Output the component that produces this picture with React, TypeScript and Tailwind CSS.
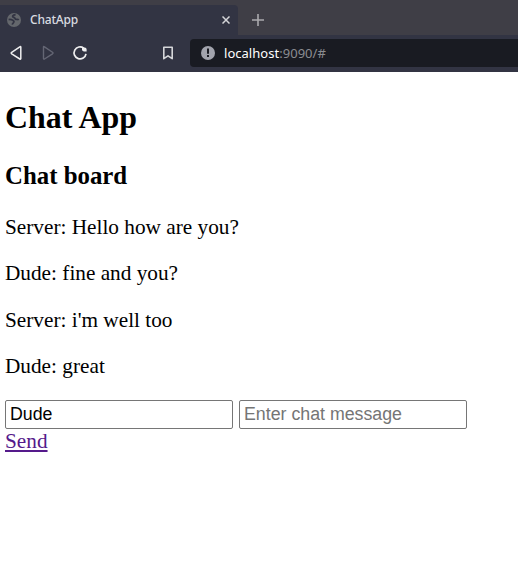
import React from "react";

function TabStrip() {
  return (
    <div className="flex h-[35px] items-end bg-[#3f3e46]">
      <div className="flex h-[30px] w-[238px] items-center rounded-tr-[4px] bg-[#323443] pl-[7px] pr-2">
        <svg width="14" height="14" viewBox="0 0 14 14">
          <circle cx="7" cy="7" r="7" fill="#64676c" />
          <path
            d="M8.6 1.6C7 1.8 5.6 2.4 5.6 3.4c0 1 1.4.8 2 1.4.5.6.3 1.3 1.3 1.5 1.2.2 2.2-.2 2.9.6M1.6 6.6c1.4-.3 3 0 4.2.7 1.2.8 1.6 1.3.8 2.2-.7.7-1.2 1-1.4 2.2"
            fill="none"
            stroke="#323443"
            strokeWidth="1.7"
          />
        </svg>
        <span className="ml-[9px] font-['Noto_Sans',sans-serif] text-[12px] font-medium leading-4 tracking-[-0.2px] text-[#d9dbe0]">ChatApp</span>
        <svg className="ml-auto" width="8" height="8" viewBox="0 0 8 8" fill="none" stroke="#d4d5d8" strokeWidth="1.5">
          <path d="M.5.5l7 7M7.5.5l-7 7" />
        </svg>
      </div>
      <svg className="mb-[9px] ml-[14px]" width="12" height="12" viewBox="0 0 12 12" fill="none" stroke="#aaa9ad" strokeWidth="1.6">
        <path d="M6 0v12M0 6h12" />
      </svg>
    </div>
  );
}

function Toolbar() {
  return (
    <div className="flex h-[37px] items-start bg-[#323443] pt-1">
      <div className="flex h-7 w-[190px] items-center pl-[10px]">
        <svg width="13" height="16" viewBox="0 0 13 16" fill="none" stroke="#eeeeef" strokeWidth="1.5" strokeLinejoin="round">
          <path d="M10.8 2v11.5q0 1-1 .5L1.7 8.8q-1-.8 0-1.5L9.8 1.8q1-.6 1 .2z" />
        </svg>
        <svg className="ml-[19px]" width="13" height="16" viewBox="0 0 13 16" fill="none" stroke="#646674" strokeWidth="1.4" strokeLinejoin="round">
          <path d="M1.5 2v11.5q0 1 1 .5l8-5.2q1-.8 0-1.5l-8-5.5q-1-.6-1 .2z" />
        </svg>
        <svg className="ml-[17px]" width="16" height="16" viewBox="0 0 16 16">
          <path d="M11.7 3.1A6 6 0 1 0 14 8.8" fill="none" stroke="#eeeeef" strokeWidth="1.7" />
          <path d="M10 2.4h2.6a2 2 0 0 1 2 2v2.1h-1.4Q10.2 6.5 10 4.4z" fill="#eeeeef" />
        </svg>
        <svg className="ml-[75px]" width="10" height="14" viewBox="0 0 10 14" fill="none" stroke="#d5d6d9" strokeWidth="1.6" strokeLinejoin="round">
          <path d="M.8 1.2h8.4v11.5L5 9.8.8 12.7z" />
        </svg>
      </div>
      <div className="flex h-7 flex-1 items-center rounded-l-[4px] bg-[#191b22] pl-[11px]">
        <svg width="14" height="14" viewBox="0 0 14 14">
          <circle cx="7" cy="7" r="7" fill="#a2a4ad" />
          <path d="M6 2.5h2v5.2H6zM6 9h2v2H6z" fill="#191b22" />
        </svg>
        <span className="ml-[9px] font-['Noto_Sans',sans-serif] text-[13px] leading-5 tracking-[0.03px] text-[#8b8c91]">
          <span className="text-white">localhost</span>:9090/#
        </span>
      </div>
    </div>
  );
}

const messages = [
  { author: "Server", text: "Hello how are you?" },
  { author: "Dude", text: "fine and you?" },
  { author: "Server", text: "i'm well too" },
  { author: "Dude", text: "great" },
];

const inputClass =
  "block h-[29px] w-[228px] rounded-[2px] border border-[#767676] bg-white px-1 font-['Liberation_Sans',Arial,sans-serif] text-[17.77px] leading-5 text-black outline-none placeholder:text-[#757575]";

export default function App() {
  return (
    <div className="h-[575px] w-[518px] overflow-hidden bg-white">
      <TabStrip />
      <Toolbar />
      <main className="px-[5px] pt-[28px] font-['Liberation_Serif','Times_New_Roman',serif] text-[21.28px] leading-[25px] text-black">
        <h1 className="text-[31.9px] font-bold leading-9">Chat App</h1>
        <h2 className="mt-[25px] text-[24.85px] font-bold leading-[29px]">Chat board</h2>
        <div className="mt-[25px] flex flex-col gap-[21.4px]">
          {messages.map((message, index) => (
            <p key={index}>
              {message.author}: {message.text}
            </p>
          ))}
        </div>
        <div className="mt-[20.8px] flex gap-[6px]">
          <input className={inputClass} defaultValue="Dude" />
          <input className={inputClass} placeholder="Enter chat message" />
        </div>
        <a href="#" className="block w-fit text-[#551a8b] underline decoration-2 underline-offset-[2px]">
          Send
        </a>
      </main>
    </div>
  );
}
